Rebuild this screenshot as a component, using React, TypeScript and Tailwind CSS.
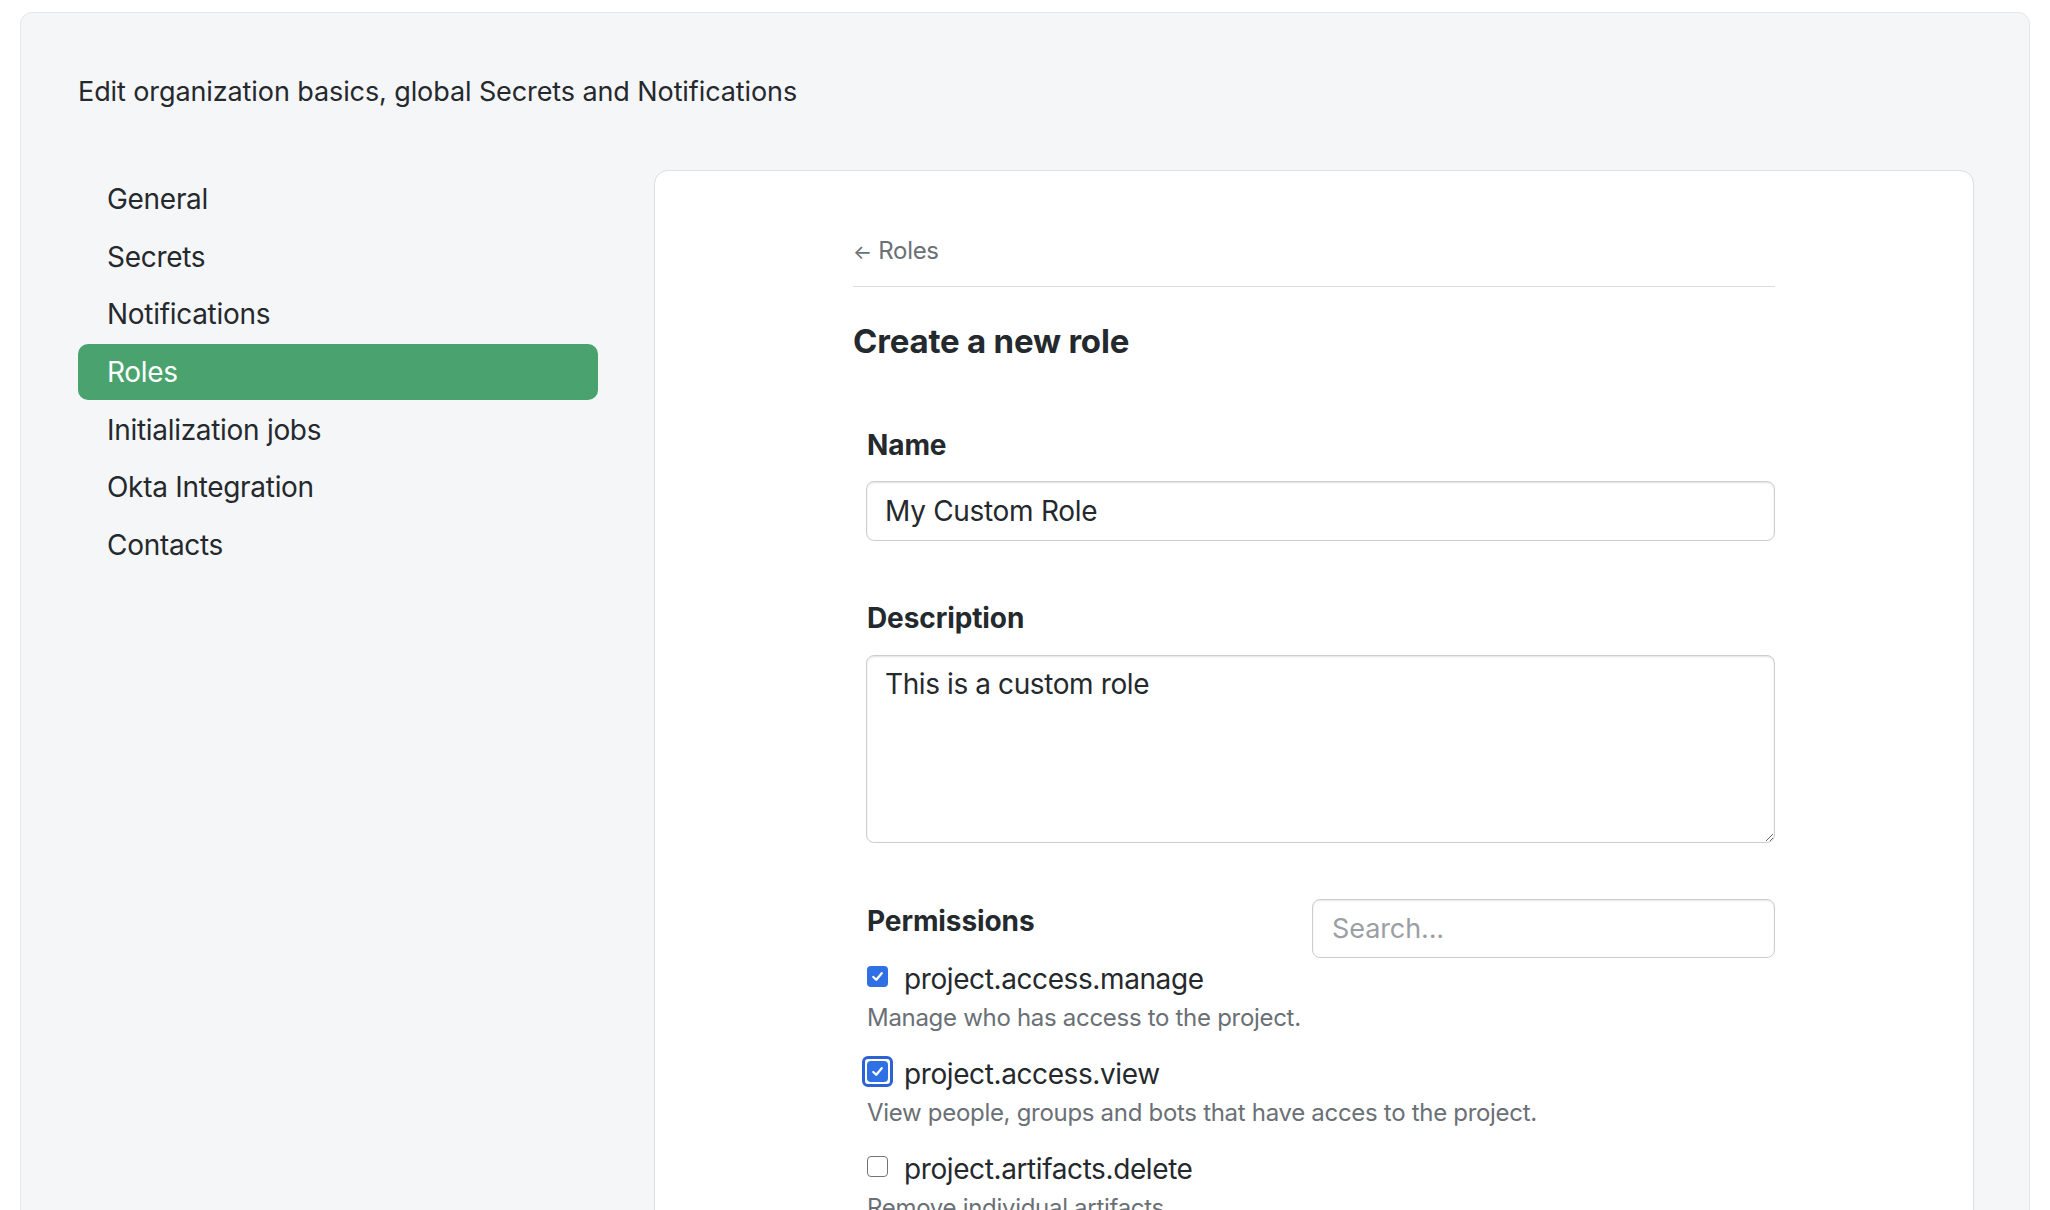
import React from "react";

const navItems = [
  "General",
  "Secrets",
  "Notifications",
  "Roles",
  "Initialization jobs",
  "Okta Integration",
  "Contacts",
];

const permissions = [
  {
    name: "project.access.manage",
    desc: "Manage who has access to the project.",
    checked: true,
    focused: false,
  },
  {
    name: "project.access.view",
    desc: "View people, groups and bots that have acces to the project.",
    checked: true,
    focused: true,
  },
  {
    name: "project.artifacts.delete",
    desc: "Remove individual artifacts.",
    checked: false,
    focused: false,
  },
];

function CheckBox({ checked, focused }: { checked: boolean; focused: boolean }) {
  const box = checked ? (
    <span className="flex h-[21px] w-[21px] items-center justify-center rounded-[4px] bg-[#2f71e4]">
      <svg width="15" height="15" viewBox="0 0 16 16" fill="none">
        <path d="M3.5 8.5 L6.7 11.5 L12.5 4.5" stroke="white" strokeWidth="2.4" strokeLinecap="round" strokeLinejoin="round" />
      </svg>
    </span>
  ) : (
    <span className="block h-[21px] w-[21px] rounded-[4px] border-[1.5px] border-[#707479] bg-white" />
  );
  if (focused) {
    return (
      <span className="flex h-[31px] w-[31px] items-center justify-center rounded-[6px] border-[3px] border-[#2c62d4] -mx-[5px]">
        {box}
      </span>
    );
  }
  return box;
}

export default function App() {
  return (
    <div className="min-h-screen bg-white px-[20px] pt-[12px] font-['Inter',sans-serif] text-[#24292e]">
      <div className="h-[1240px] rounded-[12px] border border-[#e4e6e9] bg-[#f5f6f8] pl-[57px] pr-[55px] pt-[61px]">
        <div className="text-[27px] leading-[36px] text-[#25292d] tracking-[-0.1px]">
          Edit organization basics, global Secrets and Notifications
        </div>
        <div className="mt-[60px] flex gap-[56px]">
          <nav className="flex w-[520px] shrink-0 flex-col gap-[1.7px] pt-[1px]">
            {navItems.map((item) => (
              <div
                key={item}
                className={
                  item === "Roles"
                    ? "flex h-[56px] items-center rounded-[10px] bg-[#4aa36e] pl-[29px] text-[28px] text-white tracking-[-0.3px]"
                    : "flex h-[56px] items-center rounded-[10px] pl-[29px] text-[28px] text-[#25292d] tracking-[-0.3px]"
                }
              >
                {item}
              </div>
            ))}
          </nav>
          <main className="h-[1100px] flex-1 rounded-[14px] border border-[#dcdfe3] bg-white shadow-[0_1px_2px_rgba(0,0,0,0.04)] pt-[64px]">
            <div className="mx-auto w-[922px]">
              <div className="border-b border-[#dcdcdc] pb-[18px] text-[24px] leading-[32px] text-[#6a7075] tracking-[-0.3px]">
                <span className="text-[20px]">←</span> Roles
              </div>
              <h1 className="mt-[34px] text-[33px] font-bold leading-[40px] text-[#24292e] tracking-[-0.2px]">
                Create a new role
              </h1>
              <div className="pl-[14px]">
                <div className="mt-[67px] text-[28px] font-bold leading-[34px] tracking-[-0.1px]">Name</div>
                <input
                  readOnly
                  value="My Custom Role"
                  className="-ml-[1px] mt-[19px] block h-[60px] w-[calc(100%+1px)] rounded-[8px] border border-[#cbcdd0] bg-white pl-[18px] text-[28px] text-[#25292d] tracking-[-0.3px] shadow-[inset_0_1px_2px_rgba(0,0,0,0.12)] outline-none font-['Inter',sans-serif]"
                />
                <div className="mt-[60px] text-[28px] font-bold leading-[34px] tracking-[-0.1px]">Description</div>
                <textarea
                  readOnly
                  value="This is a custom role"
                  className="-ml-[1px] mt-[20px] block h-[188px] w-[calc(100%+1px)] rounded-[8px] border border-[#cbcdd0] bg-white px-[18px] pt-[10px] text-[28px] leading-[36px] text-[#25292d] tracking-[-0.4px] shadow-[inset_0_1px_2px_rgba(0,0,0,0.12)] outline-none font-['Inter',sans-serif]"
                />
                <div className="mt-[56px] flex items-start justify-between">
                  <div className="mt-[5px] text-[28px] font-bold leading-[34px] tracking-[-0.1px]">Permissions</div>
                  <input
                    readOnly
                    placeholder="Search..."
                    className="block h-[59px] w-[463px] rounded-[8px] border border-[#cbcdd0] bg-white pl-[19px] text-[27px] text-[#25292d] placeholder:text-[#9a9fa4] tracking-[-0.1px] shadow-[inset_0_1px_2px_rgba(0,0,0,0.1)] outline-none font-['Inter',sans-serif]"
                  />
                </div>
                <div className="mt-[3px] flex flex-col">
                  {permissions.map((p) => (
                    <div key={p.name} className="mb-[22px]">
                      <div className="flex h-[36px] items-center gap-[16px]">
                        <span className="-mt-[6px] flex">
                          <CheckBox checked={p.checked} focused={p.focused} />
                        </span>
                        <span className="text-[28px] leading-[36px] text-[#25292d] tracking-[-0.4px]">{p.name}</span>
                      </div>
                      <div className="mt-[5px] text-[24px] leading-[32px] text-[#6a7075] tracking-[-0.3px]">{p.desc}</div>
                    </div>
                  ))}
                </div>
              </div>
            </div>
          </main>
        </div>
      </div>
    </div>
  );
}
